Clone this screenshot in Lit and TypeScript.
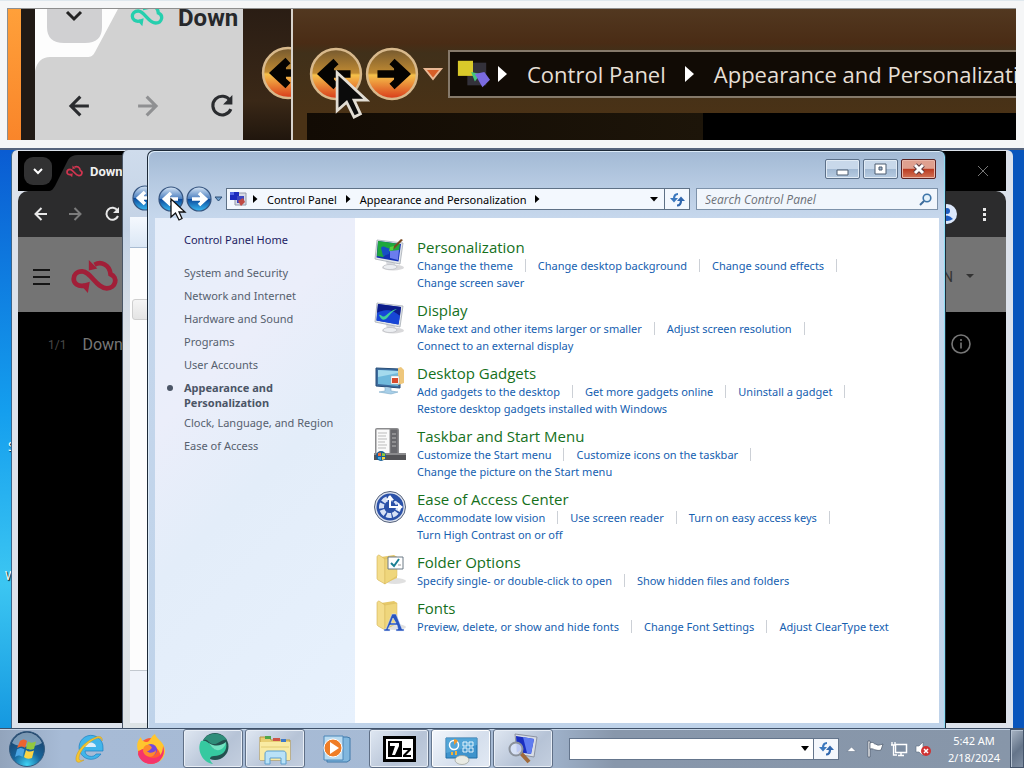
import { LitElement, html, css, svg, nothing } from "lit";
import { customElement, property } from "lit/decorators.js";

type Category = { icon: string; title: string; lines: { links: string[]; open?: boolean }[] };

const categories: Category[] = [
  { icon: "personal", title: "Personalization", lines: [
    { links: ["Change the theme", "Change desktop background", "Change sound effects"], open: true },
    { links: ["Change screen saver"] } ] },
  { icon: "display", title: "Display", lines: [
    { links: ["Make text and other items larger or smaller", "Adjust screen resolution"], open: true },
    { links: ["Connect to an external display"] } ] },
  { icon: "gadgets", title: "Desktop Gadgets", lines: [
    { links: ["Add gadgets to the desktop", "Get more gadgets online", "Uninstall a gadget"], open: true },
    { links: ["Restore desktop gadgets installed with Windows"] } ] },
  { icon: "taskbar", title: "Taskbar and Start Menu", lines: [
    { links: ["Customize the Start menu", "Customize icons on the taskbar"], open: true },
    { links: ["Change the picture on the Start menu"] } ] },
  { icon: "ease", title: "Ease of Access Center", lines: [
    { links: ["Accommodate low vision", "Use screen reader", "Turn on easy access keys"], open: true },
    { links: ["Turn High Contrast on or off"] } ] },
  { icon: "folder", title: "Folder Options", lines: [
    { links: ["Specify single- or double-click to open", "Show hidden files and folders"] } ] },
  { icon: "fonts", title: "Fonts", lines: [
    { links: ["Preview, delete, or show and hide fonts", "Change Font Settings", "Adjust ClearType text"] } ] },
];

const tasks = ["System and Security", "Network and Internet", "Hardware and Sound", "Programs",
  "User Accounts", "Appearance and Personalization", "Clock, Language, and Region", "Ease of Access"];

const folderShape = svg`
  <ellipse cx="21" cy="27" rx="11" ry="3" fill="#ccc" opacity=".6"/>
  <path d="M7 3 20 1l3 2v21L10 30z" fill="#e6c868"/>
  <path d="M3 3c0-1 1-2 2-2l6 4v25l-7-4c-1-1-1-1-1-2z" fill="#f4dd8b" stroke="#d2b050" stroke-width=".6"/>
  <path d="M11 5 23 3v19l-12 8z" fill="#efd67c" stroke="#d9bb5e" stroke-width=".5"/>`;

const monitor = (inner: unknown) => svg`
  <ellipse cx="19" cy="28.500" rx="11" ry="3" fill="#c9c9cc" opacity=".7"/>
  <path d="M12 22l9 2 1 5c-3 2-8 1-9-1z" fill="#d7d9de"/>
  <ellipse cx="16" cy="28" rx="7" ry="2.500" fill="#eceef1" stroke="#b4b6bb" stroke-width=".6"/>
  <path d="M3 1 29 4 26 25 1 20z" fill="#e2e6ea" stroke="#a7adb5" stroke-width=".8"/>
  <path d="M4 2 27 5 24.500 22.500 2.500 18.500z" fill="#1330b4"/>${inner}`;

const categoryIcons: Record<string, unknown> = {
  personal: monitor(svg`
    <path d="M4 2 26 5 25 12 15 13 9 18 3 17z" fill="#1fa83c"/>
    <path d="M7 9c3-4 6 2 10 0l-2 6-6 2z" fill="#174fc4"/>
    <path d="M16 12l9-1-1 10-8-2z" fill="#6b7dee"/>
    <path d="M27 0 29 1 20 10 18 9z" fill="#7a4a22"/><path d="M16 8l4-1-1 4-4 1z" fill="#56d23b"/>`),
  display: monitor(svg`
    <path d="M4 2 27 5 26 14C18 7 10 7 3 11z" fill="#0c1c8a"/>
    <path d="M3 11c8-4 15-4 23 3l-1.500 8.500-22-4z" fill="#1746d6"/>
    <path d="M5 13c2-1 3 3 6 1s6-6 12-7c-6 3-7 6-10 9s-6 2-8-3z" fill="#3fcf9c"/>`),
  gadgets: svg`
    <path d="M2 3 26 4v19L2 21z" fill="#3d6c9e" stroke="#274d78"/>
    <path d="M4 5 24 6v15L4 19z" fill="#6fb9dc"/><path d="M4 12 24 8V6L4 5z" fill="#a4daed"/>
    <path d="M11 22v4l-6 1 12 2 7-2-7-1v-3" fill="#a8cfe8" stroke="#7ba9c8" stroke-width=".6"/>
    <path d="M24 3l3-1 3 3v13l-6 2z" fill="#eec77c"/>
    <path d="M17 11h8v8h-8z" fill="#fff" stroke="#aaa" stroke-width=".5"/><path d="M18 13h6v5h-6z" fill="#d84a2b"/>`,
  taskbar: svg`
    <rect x="1" y="0" width="24" height="31" rx="2" fill="#8c8c8e"/><rect x="2.500" y="1.500" width="13" height="25" fill="#fafafa"/>
    <path d="M4 5h9M4 8h8M4 11h9M4 14h7M4 17h9M4 20h8" stroke="#bbb"/>
    <rect x="16.500" y="1.500" width="7" height="25" fill="#68686c"/>
    <path d="M18 6h4M18 10h4M18 14h4M18 18h4" stroke="#b8b8b8"/>
    <path d="M0 25h32v7H0z" fill="#545457"/><path d="M0 25h32v2H0z" fill="#8b8b8d"/>
    <circle cx="7" cy="28" r="5" fill="#1a5f96"/><path d="M4 25l3-.5V28H4z" fill="#ef6a35"/><path d="M8 25l3 .5V28H8z" fill="#8fcb3c"/>
    <path d="M4 29h3v3l-3-1z" fill="#42a9e6"/><path d="M8 29h3v2l-3 1z" fill="#fbd23a"/>`,
  ease: svg`
    <circle cx="16" cy="16" r="15.500" fill="#dce2ee" stroke="#56627c"/><circle cx="16" cy="16" r="13.500" fill="#2b51a8"/>
    <circle cx="16" cy="16" r="8.500" fill="none" stroke="#d8e2f6" stroke-width="5" stroke-dasharray="5 1.700" transform="rotate(80 16 16)"/>
    <path d="M17 3A13 13 0 0 1 29 15l-7-5-5-1z" fill="#2b51a8"/>
    <path d="M15 16V9h-3l4-5 4 5h-3v6h7v-3l5 4-5 4v-3h-9z" fill="#fff"/>`,
  folder: svg`${folderShape}
    <path d="M14 3h15v12H14z" fill="#fff" stroke="#6d7b86"/>
    <path d="M17 9l3 3 5-7" fill="none" stroke="#1a7f93" stroke-width="2"/><path d="M24 11h3" stroke="#999"/>`,
  fonts: svg`${folderShape}
    <path d="M18 14h4l6 15h2v2h-8v-2h2l-1-4h-7l-2 4h2v2h-6v-2h2zm1 4-2 5h5z" fill="#2a56c0" stroke="#dfe8fb" stroke-width=".5"/>`,
};

const logoCloud = (color: string) => svg`
  <path d="M15 27C7 29 3 24 3 20s3-8 9-8c9 0 15 18 26 18 10 0 12-12 4-15C41 5 32 1 25 5" fill="none" stroke="${color}" stroke-width="5"/>
  <path d="M19 0v11l9-2zM20 23l-2 12-8-9z" fill="${color}"/>`;

const arrowIcon = (color: string) => svg`<path d="M10.500 3 4.500 9l6 6M4.500 9H16" fill="none" stroke="${color}" stroke-width="2"/>`;
const reloadIcon = (color: string) => svg`
  <path d="M14.500 5.500A6 6 0 1 0 15 11" fill="none" stroke="${color}" stroke-width="2"/><path d="M16 2v6h-6z" fill="${color}"/>`;
const swapIcon = svg`
  <path d="M9 3Q5 3 5 8" fill="none" stroke="#3b78be" stroke-width="2.200"/><path d="M1 7h8l-4 4.500z" fill="#3b78be"/>
  <path d="M8 14.500q4 0 4-5" fill="none" stroke="#2f66ad" stroke-width="2.200"/><path d="M8 10h8l-4-4.500z" fill="#2f66ad"/>`;
const cpSmall = svg`
  <path d="M6 3h11v12H6z" fill="#d7dbe6" stroke="#9298a8"/><path d="M1 2h9v8H1z" fill="#1c2bbd"/>
  <path d="M8 6h7v7H8z" fill="#3c46c0"/><path d="M9 11l5-3 2 4-4 4z" fill="#c04a44"/><path d="M1 2h4v3H1z" fill="#5468e6"/>`;
const cursor = (fill: string, edge: string) => svg`
  <path d="M1 1v18l4.500-4 3.500 7 3-1.500-3-6.500h6z" fill="${fill}" stroke="${edge}" stroke-width="1.300"/>`;

const orb = (id: string, back: boolean, c: string[], ink: string) => html`
  <svg viewBox="0 0 26 26" aria-hidden="true">
    <defs><linearGradient id=${id} x1="0" y1="0" x2="0" y2="1">
      <stop offset="0" stop-color=${c[0]}/><stop offset=".48" stop-color=${c[1]}/>
      <stop offset=".52" stop-color=${c[2]}/><stop offset="1" stop-color=${c[3]}/></linearGradient></defs>
    <circle cx="13" cy="13" r="12" fill="url(#${id})" stroke=${c[4]} stroke-width="1.200"/>
    <g transform=${back ? "" : "rotate(180 13 13)"}><path d="M4.500 13 12 6v14z" fill=${ink}/>
      <path d="M13 7 6.500 13l6.500 6M7 13h13" fill="none" stroke=${ink} stroke-width="3.600"/></g>
  </svg>`;
const blueOrb = ["#d5e4f4", "#4d80c0", "#0b4a9c", "#39b9f2", "#35547f"];
const amberOrb = ["#75592f", "#c08a32", "#f6c24b", "#d8391a", "#d8b98c"];

const taskIcons: Record<string, unknown> = {
  start: svg`<defs><radialGradient id="so" cx=".5" cy=".95" r=".9"><stop offset="0" stop-color="#3fd3f5"/><stop offset=".45" stop-color="#17659c"/><stop offset="1" stop-color="#1c3f66"/></radialGradient></defs>
    <circle cx="18" cy="18" r="17.500" fill="url(#so)" stroke="#345a7e"/><path d="M3 12a16 16 0 0 1 30 0c-8 5-22 5-30 0z" fill="#b9d0e2" opacity=".6"/>
    <path d="M11 10c3-2 5-2 7 0l-2 7c-2-2-5-2-8 0z" fill="#ec6430"/><path d="M19 10.500c2 1.500 5 1.500 8 0l-2 7.500c-3 1-5 1-8-.5z" fill="#93c83e"/>
    <path d="M8 18.500c3-2 5-2 7.500 0l-2 7.500c-3-2-5-2-7.500 0z" fill="#4aa5e4"/><path d="M17 19c2 2 5 2 8 .5l-2 7.500c-3 1-6 1-8-1z" fill="#fbd445"/>`,
  ie: svg`<path d="M28 21A12 12 0 1 1 30 15v3H12c0 6 9 7 11 3z" fill="#41b5ea" stroke="#1d7fc0" stroke-width=".7"/>
    <path d="M12 14h11c0-6-11-6-11 0z" fill="#dceefa"/>
    <path d="M29 8c1-4-2-6-8-3C11 9 2 20 3 27c1 4 5 2 8 0-4 1-5 0-5-2C6 18 17 7 25 5c3 0 4 1 4 3z" fill="#f6c52f" stroke="#c79a1e" stroke-width=".5"/>`,
  firefox: svg`<circle cx="16" cy="18" r="13" fill="#ff5a35"/><path d="M3 18C1 11 3 7 6 4c0 3 3 5 6 5 3 0 4-6 8-8 1 5 10 8 10 17 0 4-2 8-5 10 2-8-2-13-7-15z" fill="#ffc62f"/>
    <path d="M3 21c2 9 13 13 21 7 5-4 6-10 4-15 0 8-4 12-10 12s-9-4-8-9c-3 0-6 1-7 5z" fill="#f5346c"/><circle cx="16" cy="17" r="6" fill="#7447dc"/>
    <path d="M9 14c3-4 7-2 8 1-2 1-2 3-5 3 2 3 7 2 9-1 0 6-5 8-9 6s-5-6-3-9z" fill="#ff8a2c"/>`,
  iron: svg`<circle cx="18" cy="13.500" r="13.500" fill="#23514f"/><path d="M6 8C10-2 26-1 30 7c-5-2-9 5-14 4S10 4 6 8z" fill="#2f8d79"/>
    <path d="M4 8c4-1 8 1 10 5 4 6 12 4 15-4 2 9-4 14-12 14-4 0-6 3-1 8C6 30-1 17 4 8z" fill="#36c9a0"/><path d="M12 10c6 4 12 3 17-1-1 8-11 13-17 1z" fill="#73e3c2"/>`,
  explorer: svg`<path d="M1 4h9l2 3h19v20H1z" fill="#e9cf73" stroke="#b99842"/><path d="M6 3h6v3H6z" fill="#50a64a"/><path d="M14 5h7v3h-7z" fill="#cc5347"/><path d="M22 6h5v3h-5z" fill="#3f79c9"/>
    <path d="M1 9h30v18H1z" fill="#f9eba3"/><path d="M2 14h28" stroke="#e2cb74"/>
    <path d="M6 21c0-2 1-3 3-3h15c2 0 3 1 3 3v10h-5v-6H11v6H6z" fill="#b9e2f7" stroke="#5d9fce"/>`,
  player: svg`<path d="M6 4h20l3 1v22l-3 2H6z" fill="#81b7de" stroke="#3f79aa"/><path d="M3 3h19v24H3z" fill="#b9dbf1" stroke="#4b86b8"/>
    <circle cx="12" cy="15" r="9" fill="#ef7d26" stroke="#fff"/><path d="M9 9v12l9-6z" fill="#fff"/>`,
  zip: svg`<path d="M1.500 4.500h30v23h-30z" fill="#fff" stroke="#000" stroke-width="3"/><path d="M5 8h14v16H5z" fill="#000"/>
    <path d="M7 10h9v3l-4 9H9l3-9H7z" fill="#fff"/><path d="M20 15h8v2l-5 5h5v2h-8v-2l5-5h-5z" fill="#000"/>`,
  panel: svg`<path d="M1 5h31v20H1z" fill="#3e93cc" stroke="#1f6ca5"/><path d="M1 5h31v7L1 20z" fill="#62b0de" opacity=".6"/>
    <circle cx="9" cy="12" r="4.500" fill="none" stroke="#fff" stroke-width="1.500"/><path d="M9 12V6a6 6 0 0 1 4 2z" fill="#f09a2c"/>
    <path d="M18 9h4v4h-4zM24 9h4v4h-4zM18 15h4v4h-4zM24 15h4v4h-4z" fill="none" stroke="#e6f5fd"/>
    <path d="M7 19v3M11 18v4" stroke="#f2b13a" stroke-width="2"/><ellipse cx="17" cy="27" rx="7" ry="4.500" fill="#e9ebe4" stroke="#9a9d98" stroke-width=".7"/>`,
  finder: svg`<path d="M8 1l22 3-3 20-17-3z" fill="#d8dde6" stroke="#8c93a2"/><path d="M9 3l18 3-3 15-14-2z" fill="#1a2fc0"/><path d="M16 4l11 2-3 15-4-1z" fill="#5f7cf0"/>
    <path d="M12 18l10 11" stroke="#a06a3a" stroke-width="4"/><circle cx="9" cy="16" r="6.500" fill="#d9e4fa" fill-opacity=".85" stroke="#8b929c" stroke-width="2"/>`,
};

const face = css`
  :host { font-family: "Noto Sans", "Open Sans", sans-serif; }
  * { box-sizing: border-box; }
  svg { display: block; flex: none; overflow: visible; }
  button { font: inherit; margin: 0; padding: 0; border: 0; background: none; color: inherit; }
  a { color: inherit; text-decoration: none; }
`;

@customElement("screen-magnifier")
class ScreenMagnifier extends LitElement {
  static styles = [face, css`
    :host { display: block; height: 150px; padding: 7px 8px 8px 7px; background: #f5f6f7; border-bottom: 2px solid #56647c; border-top: 1px solid #dfe8ee; }
    .lens { display: flex; height: 100%; overflow: hidden; border: 1px solid #8e8e8e; border-width: 1px 0 0 1px; background: #1c140f; }
    .wall { width: 13px; background: linear-gradient(#ffa03a, #f9852a); }
    .rim { width: 14px; background: #211a15; }
    .browser { display: grid; width: 208px; flex: none; overflow: hidden; background: #d2d2d2; }
    .browser > * { grid-area: 1 / 1; }
    .rows { display: flex; flex-direction: column; }
    .tab { display: flex; height: 40px; padding-left: 95px; gap: 14px; }
    .tab svg { margin-top: -6px; }
    .tab span { font: 700 24px/18px Roboto, sans-serif; color: #26282b; }
    .tools { display: flex; gap: 43px; padding: 43px 0 0 29px; }
    .behind { width: 50px; flex: none; overflow: hidden; background: linear-gradient(#2a1d14, #3a2817 70%, #20160d); border-right: 2px solid #d8d3cc; padding: 37px 0 0 18px; }
    .orb { width: 54px; height: 54px; flex: none; }
    .front { display: flex; flex-direction: column; flex: 1; min-width: 0; background: linear-gradient(#523820, #4a2c15 34px, #40301a 44px, #4a3216 105px); }
    .bar { display: flex; align-items: center; padding: 25px 0 0 16px; gap: 2px; height: 104px; overflow: hidden; flex: none; }
    .bar .drop { margin: 0 3px 0 2px; }
    .path { display: flex; align-items: center; flex: 1; min-width: 0; height: 48px; gap: 19px; padding-left: 6px; border: 2px solid #85796a; border-right: 0; background: #110b05; color: #e6dfd5; font: 22px "Open Sans", sans-serif; white-space: nowrap; overflow: hidden; }
    .path .logo { margin-right: -11px; }
    .below { display: flex; flex: 1; margin-left: 14px; background: #000; }
    .below i { width: 396px; background: linear-gradient(90deg, #120b04, #1d1509); }
    .pointer { position: absolute; left: 335px; top: 70px; }
  `];
  render() {
    return html`<div class="lens">
      <div class="wall"></div><div class="rim"></div>
      <div class="browser">
        <svg width="208" height="133" viewBox="0 0 208 133"><path d="M0 0h83L60 43c-2 4-4 5-8 5H15Q3 48 0 62z" fill="#fdfdfd"/>
          <path d="M12 0h55v18q0 16-17 16H29q-17 0-17-16z" fill="#d0d0d2"/><path d="M32 3l7 7 7-7" fill="none" stroke="#222" stroke-width="3"/></svg>
        <div class="rows">
          <div class="tab"><svg width="34" height="24" viewBox="0 0 50 36">${logoCloud("#26cfae")}</svg><span>Down</span></div>
          <div class="tools">
            <svg width="28" height="28" viewBox="0 0 18 18">${arrowIcon("#2a2c2f")}</svg>
            <svg width="28" height="28" viewBox="0 0 18 18"><g transform="rotate(180 9 9)">${arrowIcon("#8f9092")}</g></svg>
            <svg width="31" height="28" viewBox="0 0 18 18">${reloadIcon("#2a2c2f")}</svg>
          </div>
        </div>
      </div>
      <div class="behind"><div class="orb">${orb("m0", true, amberOrb, "#050301")}</div></div>
      <div class="front">
        <div class="bar">
          <div class="orb">${orb("m1", true, amberOrb, "#050301")}</div><div class="orb">${orb("m2", false, amberOrb, "#050301")}</div>
          <svg class="drop" width="20" height="16" viewBox="0 0 20 16"><path d="M2 3h16l-8 10z" fill="#d65e28" stroke="#e9b894" stroke-width="2"/></svg>
          <div class="path">
            <svg class="logo" width="34" height="34" viewBox="0 0 18 18"><path d="M6 3h10v12H6z" fill="#33313a"/><path d="M1 2h8v8H1z" fill="#d9c92a"/><path d="M8 8l5 1-3 4z" fill="#45c47a"/><path d="M10 9l5-1 3 4-4 4z" fill="#7a6ae0"/></svg>
            <svg width="10" height="16"><path d="M0 0v16l9-8z" fill="#fff"/></svg><span>Control Panel</span>
            <svg width="10" height="16"><path d="M0 0v16l9-8z" fill="#fff"/></svg><span>Appearance and Personalization</span>
          </div>
        </div>
        <div class="below"><i></i></div>
      </div>
    </div>
    <svg class="pointer" width="36" height="56" viewBox="0 0 17 26">${cursor("#0b0b0b", "#e2ddd4")}</svg>`;
  }
}

@customElement("browser-window")
class BrowserWindow extends LitElement {
  static styles = [face, css`
    :host { display: flex; flex-direction: column; padding: 1px 7px 5px 6px; background: #dce2eb; border-left: 1px solid #3e6488; border-radius: 6px 6px 0 0; }
    .tabs { display: flex; justify-content: space-between; height: 40px; background: #000; }
    .left { display: grid; width: 200px; }
    .left > * { grid-area: 1 / 1; }
    .tab { display: flex; align-items: center; gap: 7px; padding-left: 48px; font: 700 13px Roboto, sans-serif; color: #f0f0f0; }
    .close { padding-right: 17px; }
    .tools { display: flex; align-items: center; gap: 18px; padding: 0 13px; height: 46px; background: #2c2c2d; border-radius: 10px 10px 0 0; }
    .tools .avatar { margin-left: auto; }
    .head { display: flex; align-items: center; gap: 20px; height: 75px; padding: 4px 32px 0 14px; background: #747474; color: #333; }
    .head .lang { margin-left: auto; display: flex; align-items: center; gap: 13px; font: 14px Roboto, sans-serif; }
    .page { display: flex; flex: 1; padding: 23px 34px 0 30px; gap: 16px; background: #000; font: 16px/20px Roboto, sans-serif; color: #777; }
    .page small { font-size: 12px; color: #484848; }
    .page svg { margin: -2px 0 0 auto; }
  `];
  render() {
    return html`
      <div class="tabs">
        <div class="left">
          <svg width="200" height="40"><path d="M30 40c4 0 5-2 7-5L50 9q3-5 10-5h140v36z" fill="#2c2c2d"/>
            <rect x="6" y="6" width="28" height="28" rx="9" fill="#313132"/><path d="M16 18l4 4 4-4" fill="none" stroke="#fff" stroke-width="2"/></svg>
          <div class="tab"><svg width="17" height="13" viewBox="0 0 50 36">${logoCloud("#d33550")}</svg><span>Down</span></div>
        </div>
        <button class="close" aria-label="Close"><svg width="12" height="12"><path d="M1 1l10 10M11 1 1 11" stroke="#777" stroke-width="1"/></svg></button>
      </div>
      <div class="tools">
        <button aria-label="Back"><svg width="18" height="18">${arrowIcon("#e8e8e8")}</svg></button>
        <button aria-label="Forward"><svg width="18" height="18"><g transform="rotate(180 9 9)">${arrowIcon("#7c7c7c")}</g></svg></button>
        <button aria-label="Reload"><svg width="18" height="18">${reloadIcon("#e8e8e8")}</svg></button>
        <svg class="avatar" width="20" height="20"><circle cx="10" cy="10" r="10" fill="#dce8fb"/><circle cx="10" cy="7" r="3" fill="#1c5cc0"/><path d="M4 15q6-7 12 0-6 4-12 0z" fill="#1c5cc0"/></svg>
        <button aria-label="Menu"><svg width="18" height="18"><path d="M8 3h3v3H8zM8 8h3v3H8zM8 13h3v3H8z" fill="#e8e8e8"/></svg></button>
      </div>
      <div class="head">
        <button aria-label="Site menu"><svg width="18" height="16"><path d="M1 1h17M1 8h17M1 15h17" stroke="#151515" stroke-width="2"/></svg></button>
        <svg width="49" height="34" viewBox="0 0 50 36">${logoCloud("#a11f38")}</svg>
        <div class="lang">EN<svg width="8" height="5"><path d="M0 0h8L4 4z" fill="#333"/></svg></div>
      </div>
      <div class="page"><small>1/1</small><span>Download</span>
        <svg width="22" height="22"><circle cx="11" cy="11" r="9" fill="none" stroke="#777" stroke-width="1.600"/><path d="M11 9.500v6M11 6v2" stroke="#777" stroke-width="1.600"/></svg></div>`;
  }
}

@customElement("back-window")
class BackWindow extends LitElement {
  static styles = [face, css`
    :host { display: flex; flex-direction: column; padding: 0 7px 5px 7px; background: linear-gradient(#cfdcec, #c3d2e5 80px, #dfe3e8 200px, #dde3e6); border-left: 1px solid #4a5666; border-radius: 6px 0 0 0; }
    .nav { height: 67px; padding: 35px 0 0 2px; }
    .orb { width: 26px; height: 26px; }
    .band { height: 31px; background: linear-gradient(#f5f9fe, #dbe7f5); border-bottom: 1px solid #a9bcd2; }
    .page { flex: 1; padding: 51px 0 0 2px; background: #fdfdfd; }
    .box { width: 100px; height: 21px; border: 1px solid #cfcfcf; border-radius: 3px; background: linear-gradient(#f5f5f5, #e4e4e4); }
    .foot { height: 53px; border-top: 1px solid #c3c8cf; background: #f0f3fa; }
  `];
  render() {
    return html`<div class="nav"><div class="orb">${orb("b0", true, blueOrb, "#fff")}</div></div>
      <div class="band"></div><div class="page"><div class="box"></div></div><div class="foot"></div>`;
  }
}

@customElement("control-panel")
class ControlPanel extends LitElement {
  static styles = [face, css`
    :host { display: flex; flex-direction: column; padding: 0 6px 5px 7px; font-size: 11px; border: 1px solid #1d2a38; border-bottom: 0; border-radius: 7px 7px 0 0;
      background: linear-gradient(#a2b9d4, #b5c9e1 30px, #c6d7ec 66px, #bfd3ea 100%); box-shadow: inset 1px 1px 0 #dcebf8, inset -1px 0 0 #8edcf2; }
    .caption { display: flex; justify-content: flex-end; gap: 3px; padding: 8px 3px 0 0; height: 37px; }
    .caption button { display: grid; place-items: center; width: 35px; height: 20px; border: 1px solid #5c7089; border-radius: 2px; background: linear-gradient(#c8d8ea 48%, #a2b9d3 52%, #b7cce2); box-shadow: inset 0 0 0 1px #e1ebf5; }
    .caption .close { border-color: #5a2222; background: linear-gradient(#dfa08f 46%, #bb3c22 52%, #d27356); box-shadow: inset 0 0 0 1px #e9b6a8; }
    .nav { display: flex; align-items: center; height: 30px; padding: 0 1px 8px 2px; }
    .orb { width: 28px; height: 26px; }
    .orb svg { height: 26px; margin: 0 1px; }
    .drop { margin: 0 2px 0 1px; }
    .path { display: flex; align-items: center; flex: 1; height: 22px; margin-left: 1px; border: 1px solid #5e7186; background: #f3f8fe; }
    .crumbs { display: flex; align-items: center; gap: 9px; flex: 1; padding-left: 2px; }
    .crumbs .logo { margin-right: -3px; }
    .down { padding: 0 6px; }
    .sync { display: grid; place-items: center; width: 25px; height: 20px; border-left: 1px solid #5e7186; }
    .search { display: flex; align-items: center; width: 242px; height: 22px; margin-left: 6px; padding: 0 5px 0 8px; border: 1px solid #7d92aa; background: #f1f6fc; }
    .search input { flex: 1; min-width: 0; padding: 0; border: 0; outline: 0; background: none; font: italic 12px "Open Sans", sans-serif; }
    .search input::placeholder { color: #6d7178; opacity: 1; }
    .body { display: flex; flex: 1; min-height: 0; background: #fff; }
    nav { width: 200px; flex: none; padding: 14px 12px 0 29px; line-height: 15px; color: #56606e; background: linear-gradient(135deg, #e6eefa, #ebeefa 30%, #e3edf9 52%, #e7f1fd); }
    nav .home { display: block; color: #1c1c62; margin-bottom: 18px; }
    ul { margin: 0; padding: 0; list-style: none; }
    li { margin-bottom: 8px; }
    li.here { position: relative; padding-right: 48px; margin-bottom: 5px; font-weight: 700; color: #4b5566; }
    li.here::before { content: ""; position: absolute; left: -17px; top: 5px; width: 6px; height: 6px; border-radius: 50%; background: #4b5566; }
    main { flex: 1; min-width: 0; padding: 19px 0 0 19px; }
    section { display: flex; gap: 11px; margin-bottom: 9px; }
    section > svg { margin-top: 2px; margin-bottom: -6px; }
    h2 { margin: 0; font: 400 15px/20px "Open Sans", sans-serif; color: #15701c; }
    .line { display: flex; align-items: center; line-height: 17px; color: #1560b0; white-space: nowrap; }
    .line i { width: 1px; height: 13px; margin: 0 12px; background: #ccd0d6; }
  `];
  render() {
    return html`
      <div class="caption">
        <button aria-label="Minimize"><svg width="13" height="14"><path d="M1 8h11v5H1z" fill="#fff" stroke="#4c5c70"/></svg></button>
        <button aria-label="Maximize"><svg width="13" height="12"><path d="M1 1h11v10H1z" fill="#fff" stroke="#4c5c70"/><path d="M5 4h3v3H5z" fill="#9fb4cc" stroke="#4c5c70"/></svg></button>
        <button class="close" aria-label="Close"><svg width="14" height="12"><path d="M3 2l8 8M11 2 3 10" stroke="#5b3b40" stroke-width="5"/><path d="M3 2l8 8M11 2 3 10" stroke="#fff" stroke-width="3"/></svg></button>
      </div>
      <div class="nav">
        <button class="orb" aria-label="Back">${orb("c0", true, blueOrb, "#fff")}</button>
        <button class="orb" aria-label="Forward">${orb("c1", false, blueOrb, "#fff")}</button>
        <button class="drop" aria-label="Recent pages"><svg width="9" height="7"><path d="M1 1h7L4.500 5z" fill="#6c9fce" stroke="#2c4d75"/></svg></button>
        <div class="path">
          <div class="crumbs"><svg class="logo" width="18" height="18">${cpSmall}</svg>
            <svg width="5" height="8"><path d="M0 0v8l4.500-4z"/></svg><a href="#">Control Panel</a>
            <svg width="5" height="8"><path d="M0 0v8l4.500-4z"/></svg><a href="#">Appearance and Personalization</a>
            <svg width="5" height="8"><path d="M0 0v8l4.500-4z"/></svg></div>
          <button class="down" aria-label="Previous locations"><svg width="8" height="5"><path d="M0 0h8L4 4.500z"/></svg></button>
          <button class="sync" aria-label="Refresh"><svg width="17" height="17">${swapIcon}</svg></button>
        </div>
        <label class="search"><input type="text" placeholder="Search Control Panel" aria-label="Search Control Panel">
          <svg width="13" height="13"><circle cx="8" cy="5" r="3.800" fill="#e4f2fb" stroke="#3d74a8" stroke-width="1.600"/><path d="M5 8l-4 4" stroke="#3d6c9c" stroke-width="2"/></svg></label>
      </div>
      <div class="body">
        <nav><a class="home" href="#">Control Panel Home</a>
          <ul>${tasks.map((t, i) => html`<li class=${i === 5 ? "here" : ""}><a href="#">${t}</a></li>`)}</ul></nav>
        <main>${categories.map(c => html`<section>
          <svg width="32" height="32">${categoryIcons[c.icon]}</svg>
          <div><h2><a href="#">${c.title}</a></h2>
            ${c.lines.map(l => html`<div class="line">${l.links.map((t, i) => html`<a href="#">${t}</a>${l.open || i < l.links.length - 1 ? html`<i></i>` : nothing}`)}</div>`)}</div>
        </section>`)}</main>
      </div>`;
  }
}

@customElement("task-button")
class TaskButton extends LitElement {
  @property() icon = "";
  @property() label = "";
  @property() mode = "";
  static styles = [face, css`
    button { display: grid; place-items: center; width: 60px; height: 39px; border: 1px solid transparent; border-radius: 3px; }
    .open { border-color: #5f6f86; background: linear-gradient(135deg, #dfe7f2, #b6c3d6 60%, #c4cfdf); box-shadow: inset 0 0 0 1px #e8eef6; }
    .front { border-color: #66788f; background: linear-gradient(135deg, #f3f7fc, #d5dfed 60%, #e3eaf4); box-shadow: inset 0 0 0 1px #fff; }
  `];
  render() {
    return html`<button class=${this.mode} aria-label=${this.label}><svg width="32" height="32">${taskIcons[this.icon]}</svg></button>`;
  }
}

@customElement("task-bar")
class TaskBar extends LitElement {
  static styles = [face, css`
    :host { display: flex; align-items: center; height: 40px; background: linear-gradient(90deg, #92a4bc, #a7bbd6 6%, #a6bad4 52%, #8897ab 60%, #8796a9); border-top: 1px solid #3e5068; box-shadow: inset 0 1px 0 #c5d5e7; }
    .start { padding: 1px 14px 0 9px; }
    .apps { display: flex; gap: 2px; }
    .address { display: flex; flex: 1; height: 22px; margin: 0 8px 0 16px; border: 1px solid #64758c; background: #fff; }
    .address input { flex: 1; min-width: 0; border: 0; outline: 0; padding: 0 4px; }
    .address button { padding: 0 4px; }
    .address .sync { display: grid; place-items: center; width: 25px; border-left: 1px solid #64758c; background: #f4f7fc; }
    .tray { display: flex; align-items: center; gap: 8px; }
    .tray .more { margin-right: 3px; }
    .clock { width: 70px; margin-left: 7px; text-align: center; font-size: 11px; line-height: 17px; color: #fff; white-space: nowrap; }
    .peek { width: 14px; height: 39px; margin-left: 1px; border: 1px solid #44546a; background: linear-gradient(135deg, #a9b5c4, #65758a 55%, #7f8ea2); box-shadow: inset 1px 1px 0 #b6c3d2; }
  `];
  render() {
    return html`
      <button class="start" aria-label="Start"><svg width="36" height="36">${taskIcons.start}</svg></button>
      <div class="apps">
        <task-button icon="ie" label="Internet Explorer"></task-button>
        <task-button icon="firefox" label="Firefox"></task-button>
        <task-button icon="iron" label="Browser" mode="open"></task-button>
        <task-button icon="explorer" label="Explorer" mode="open"></task-button>
        <task-button icon="player" label="Media Player"></task-button>
        <task-button icon="zip" label="Archiver" mode="open"></task-button>
        <task-button icon="panel" label="Control Panel" mode="front"></task-button>
        <task-button icon="finder" label="Magnifier" mode="open"></task-button>
      </div>
      <div class="address"><input type="text" aria-label="Address">
        <button aria-label="Address list"><svg width="8" height="5"><path d="M0 0h8L4 5z"/></svg></button>
        <button class="sync" aria-label="Go"><svg width="17" height="17">${swapIcon}</svg></button></div>
      <div class="tray">
        <svg class="more" width="9" height="6"><path d="M0 5.500h9L4.500 1z" fill="#fff" stroke="#5b6b80" stroke-width=".5"/></svg>
        <svg width="16" height="16"><path d="M1 0h2v16H1z" fill="#fff" stroke="#4a5869" stroke-width=".7"/><path d="M3 2c4-2 4 2 6 1 1 2 4 1 7 0l-2 6c-3 1-4 0-5 0-2 0-3-2-6-1z" fill="#fff" stroke="#4a5869" stroke-width=".7"/></svg>
        <svg width="16" height="16"><path d="M4.500 3.500h11v8h-11zM7 14.500h6M10 11.500v3" fill="#7c8ca0" stroke="#fff" stroke-width="1.500"/><path d="M0 4h5M1 1v3M4 1v3M2.500 4v10H6" fill="none" stroke="#fff" stroke-width="1.300"/></svg>
        <svg width="17" height="16"><path d="M1 5h3l4-4v14l-4-4H1z" fill="#fff" stroke="#5b6b80" stroke-width=".6"/><circle cx="11" cy="10" r="5" fill="#cf3232"/><path d="M9 8l4 4M13 8l-4 4" stroke="#fff" stroke-width="1.500"/></svg>
      </div>
      <div class="clock">5:42 AM<br>2/18/2024</div>
      <button class="peek" aria-label="Show desktop"></button>`;
  }
}

@customElement("app-root")
class AppRoot extends LitElement {
  static styles = [face, css`
    :host { display: flex; flex-direction: column; height: 100vh; overflow: hidden; position: relative; }
    .desk { position: relative; flex: 1; min-height: 0; background: linear-gradient(90deg, transparent 50%, #0855bc 50%), linear-gradient(#0a5cd2, #149eee 45%, #3cc6f2 75%, #1598e0); }
    .desk > * { position: absolute; top: 0; bottom: 0; }
    browser-window { left: 11px; right: 11px; }
    back-window { left: 122px; right: 120px; top: 1px; }
    control-panel { left: 147px; right: 78px; top: 1px; }
    .desk .label { left: 5px; bottom: auto; font-size: 12px; color: #fff; text-shadow: 1px 1px 1px #000; }
    .desk .s { left: 8px; top: 288px; }
    .desk .w { top: 417px; }
    .pointer { position: absolute; left: 170px; top: 198px; }
  `];
  render() {
    return html`
      <screen-magnifier></screen-magnifier>
      <div class="desk">
        <span class="label s">S</span><span class="label w">W</span>
        <browser-window></browser-window>
        <back-window></back-window>
        <control-panel></control-panel>
      </div>
      <task-bar></task-bar>
      <svg class="pointer" width="17" height="26">${cursor("#fff", "#111")}</svg>`;
  }
}
